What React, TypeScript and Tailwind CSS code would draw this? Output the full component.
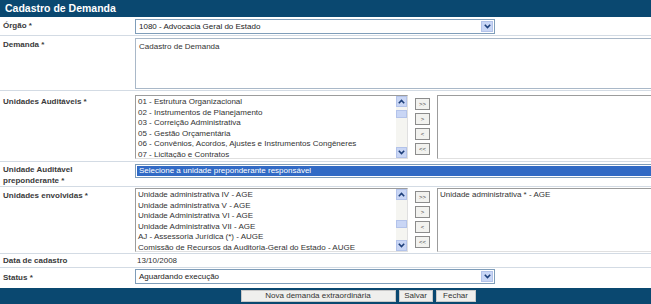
import React from "react";

const auditaveis = [
  "01 - Estrutura Organizacional",
  "02 - Instrumentos de Planejamento",
  "03 - Correição Administrativa",
  "05 - Gestão Orçamentária",
  "06 - Convênios, Acordos, Ajustes e Instrumentos Congêneres",
  "07 - Licitação e Contratos",
];

const envolvidas = [
  "Unidade administrativa IV - AGE",
  "Unidade administrativa V - AGE",
  "Unidade Administrativa VI - AGE",
  "Unidade Administrativa VII - AGE",
  "AJ - Assessoria Jurídica (*) - AUGE",
  "Comissão de Recursos da Auditoria-Geral do Estado - AUGE",
];

function Chevron({ up = false }: { up?: boolean }) {
  return (
    <svg width="7" height="5" viewBox="0 0 7 5">
      <path
        d={up ? "M0.8 4.2 L3.5 1.4 L6.2 4.2" : "M0.8 0.8 L3.5 3.6 L6.2 0.8"}
        fill="none"
        stroke="#1d3f7a"
        strokeWidth="1.6"
      />
    </svg>
  );
}

function Select({ value, width }: { value: string; width: string }) {
  return (
    <div className={`${width} h-[15px] border border-[#7f9db9] bg-white flex items-center`}>
      <span className="flex-1 pl-[3px] text-[#222]">{value}</span>
      <span className="w-[12px] h-[11px] mr-[1px] bg-[#c9d6f5] border border-[#b3c3ea] flex items-center justify-center">
        <Chevron />
      </span>
    </div>
  );
}

function ScrollBar({ thumbTop }: { thumbTop: number }) {
  return (
    <div className="w-[11px] h-full bg-[#f5f5f1] flex flex-col relative">
      <div className="w-[11px] h-[11px] bg-[#c9d6f5] border border-[#b3c3ea] flex items-center justify-center">
        <Chevron up />
      </div>
      <div className="flex-1" />
      <div className="w-[11px] h-[11px] bg-[#c9d6f5] border border-[#b3c3ea] flex items-center justify-center">
        <Chevron />
      </div>
      <div
        className="absolute left-0 w-[11px] h-[8px] bg-[#c9d6f5] border border-[#b3c3ea]"
        style={{ top: thumbTop }}
      />
    </div>
  );
}

function TransferButtons() {
  return (
    <div className="w-[15px] mx-[7px] pt-[3px] flex flex-col gap-[3px]">
      {[">>", ">", "<", "<<"].map((t) => (
        <div
          key={t}
          className="h-[12px] border border-[#8c8c8c] bg-[#f2f2ef] text-[6px] text-[#444] flex items-center justify-center leading-none"
        >
          {t}
        </div>
      ))}
    </div>
  );
}

function DualList({ items, selected, thumbTop }: { items: string[]; selected: string[]; thumbTop: number }) {
  return (
    <div className="flex h-[64px]">
      <div className="w-[273px] h-full border border-[#9c9c9c] border-b-[#e0e0e0] border-r-[#e0e0e0] flex bg-white">
        <div className="flex-1 pl-[2px] pt-[1px] leading-[10.6px] text-[#333] whitespace-nowrap overflow-hidden">
          {items.map((i) => (
            <div key={i}>{i}</div>
          ))}
        </div>
        <ScrollBar thumbTop={thumbTop} />
      </div>
      <TransferButtons />
      <div className="flex-1 h-full border border-[#9c9c9c] border-b-[#e0e0e0] border-r-[#e0e0e0] bg-white pl-[2px] pt-[1px] leading-[10.6px] text-[#333]">
        {selected.map((i) => (
          <div key={i}>{i}</div>
        ))}
      </div>
    </div>
  );
}

function Row({ label, height, children, labelPad = "pt-[4px]" }: { label: React.ReactNode; height: string; children: React.ReactNode; labelPad?: string }) {
  return (
    <div className={`flex ${height} border-b border-[#d3dbe4]`}>
      <div className={`w-[135px] shrink-0 pl-[3px] ${labelPad} font-bold text-[#3a3a3a] leading-[10.5px]`}>{label}</div>
      <div className="flex-1 pr-[4px]">{children}</div>
    </div>
  );
}

export default function App() {
  return (
    <div className="w-[651px] h-[304px] overflow-hidden bg-white font-['Liberation_Sans',Arial,sans-serif] text-[8px]">
      <div className="w-[716px]">
        <div className="h-[17px] bg-[#0a4870] text-white font-bold text-[10.5px] leading-[17px] pl-[5px]">
          Cadastro de Demanda
        </div>

        <Row label="Órgão *" height="h-[19px]">
          <div className="pt-[2px]">
            <Select value="1080 - Advocacia Geral do Estado" width="w-[360px]" />
          </div>
        </Row>

        <Row label="Demanda *" height="h-[55px]">
          <div className="pt-[2px]">
            <div className="h-[51px] border border-[#a9b8c8] pl-[3px] pt-[2px] text-[#333]">Cadastro de Demanda</div>
          </div>
        </Row>

        <Row label="Unidades Auditáveis *" height="h-[71px]" labelPad="pt-[6px]">
          <div className="pt-[4px]">
            <DualList items={auditaveis} selected={[]} thumbTop={14} />
          </div>
        </Row>

        <Row label={<>Unidade Auditável<br />preponderante *</>} height="h-[25px]" labelPad="pt-[3px]">
          <div className="pt-[2px]">
            <div className="h-[14px] border border-[#7f9db9] p-[1px]">
              <div className="h-full bg-[#316ac5] text-white pl-[2px] leading-[10px]">
                Selecione a unidade preponderante responsável
              </div>
            </div>
          </div>
        </Row>

        <Row label="Unidades envolvidas *" height="h-[67px]" labelPad="pt-[4px]">
          <div className="pt-[1px]">
            <DualList items={envolvidas} selected={["Unidade administrativa * - AGE"]} thumbTop={31} />
          </div>
        </Row>

        <Row label="Data de cadastro" height="h-[14px]" labelPad="pt-[2px]">
          <div className="pt-[2px] pl-[2px] leading-[10.5px] text-[#333]">13/10/2008</div>
        </Row>

        <div className="flex h-[20px]">
          <div className="w-[135px] shrink-0 pl-[3px] pt-[5px] font-bold text-[#3a3a3a] leading-[10.5px]">Status *</div>
          <div className="flex-1 pt-[1px]">
            <Select value="Aguardando execução" width="w-[360px]" />
          </div>
        </div>

        <div className="h-[16px] bg-[#0a4870] flex items-center justify-center gap-[3px]">
          <button className="w-[155px] h-[12px] bg-[#efefed] border border-[#c8c8c8] text-[#333] leading-none">
            Nova demanda extraordinária
          </button>
          <button className="w-[34px] h-[12px] bg-[#efefed] border border-[#c8c8c8] text-[#333] leading-none">
            Salvar
          </button>
          <button className="w-[40px] h-[12px] bg-[#efefed] border border-[#c8c8c8] text-[#333] leading-none">
            Fechar
          </button>
        </div>
      </div>
    </div>
  );
}
